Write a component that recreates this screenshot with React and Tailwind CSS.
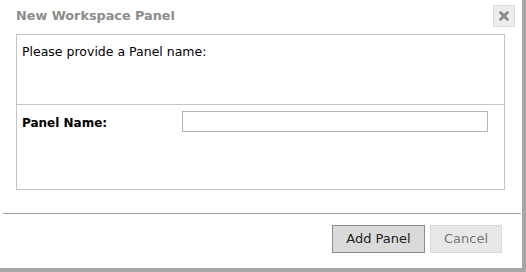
import React, { useState } from "react";

function CloseIcon() {
  return (
    <svg width="10" height="10" viewBox="0 0 10 10">
      <path d="M1.8 1.8 L8.2 8.2 M8.2 1.8 L1.8 8.2" stroke="#8a8a8a" strokeWidth="2.8" strokeLinecap="square" />
    </svg>
  );
}

export default function App() {
  const [name, setName] = useState("");

  return (
    <div className="relative h-[272px] w-[526px] overflow-hidden border-b-4 border-r-4 border-[#a6a6a6] bg-white font-['DejaVu_Sans',Verdana,sans-serif]">
      {/* header */}
      <div className="flex h-[34px] items-start justify-between pl-4 pr-[7px]">
        <h1 className="mt-[6px] text-[12.8px] font-bold text-[#8c8c8c]">New Workspace Panel</h1>
        <button className="mt-[5px] flex h-[22px] w-[22px] items-center justify-center border border-[#dcdcdc] bg-[#ececec]">
          <CloseIcon />
        </button>
      </div>

      {/* body */}
      <div className="ml-4 w-[489px] border border-[#c4c4c4]">
        <div className="h-[70px] border-b border-[#c4c4c4] px-[5px] pt-[8px] text-[12.5px] text-black">
          Please provide a Panel name:
        </div>
        <div className="flex h-[84px] items-start px-[5px] pt-[6px]">
          <label className="mt-[3px] w-[160px] text-[12px] font-bold text-black">Panel Name:</label>
          <input
            value={name}
            onChange={(e) => setName(e.target.value)}
            className="h-[21px] w-[306px] border border-[#b4b4b4] bg-white px-1 text-[12px] outline-none"
          />
        </div>
      </div>

      {/* footer */}
      <div className="ml-[3px] mt-[23px] w-[518px] border-t border-[#a6a6a6]" />
      <div className="flex justify-end gap-[5px] pr-[20px] pt-[11px]">
        <button className="h-[28px] w-[93px] border border-[#8c8c8c] bg-[#dadada] text-[13px] text-[#222]">Add Panel</button>
        <button className="h-[28px] w-[72px] border border-[#dadada] bg-[#e8e8e8] text-[13px] text-[#777]">Cancel</button>
      </div>
    </div>
  );
}
